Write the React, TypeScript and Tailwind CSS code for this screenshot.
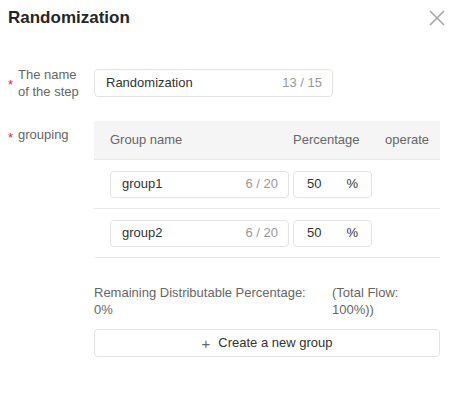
import React from "react";

const font = { fontFamily: '"Liberation Sans", Arial, sans-serif' };

function Star() {
  return <span className="text-[#f5222d] text-[13px] leading-[18px] w-[10px] shrink-0 pt-[3px]">*</span>;
}

export default function App() {
  return (
    <div className="w-[457px] h-[403px] bg-white text-[13px] text-[#333]" style={font}>
      <div className="flex items-center justify-between h-[35px] pl-[8px] pr-[12px]">
        <div className="text-[17px] font-bold text-[#262626]">Randomization</div>
        <svg width="16" height="16" viewBox="0 0 16 16" className="mt-[1px]">
          <path d="M1 1L15 15M15 1L1 15" stroke="#a6a6a6" strokeWidth="1.6" />
        </svg>
      </div>

      <div className="flex mt-[31px] pl-[8px]">
        <div className="flex items-center w-[86px] self-start">
          <Star />
          <div className="text-[#666] leading-[17px]">
            The name
            <br />
            of the step
          </div>
        </div>
        <div className="mt-[3px] w-[239px] h-[28px] border border-[#e3e3e3] rounded-[4px] flex items-center justify-between pl-[11px] pr-[10px]">
          <span>Randomization</span>
          <span className="text-[#999]">13 / 15</span>
        </div>
      </div>

      <div className="flex mt-[21px] pl-[8px]">
        <div className="flex items-start w-[86px] pt-[5px]">
          <Star />
          <div className="text-[#666] leading-[18px]">grouping</div>
        </div>
        <div className="w-[346px]">
          <div className="grid grid-cols-[195px_88px_63px] h-[39px] items-center bg-[#f5f5f5] border-b border-[#e8e8e8] text-[#666]">
            <div className="pl-[16px]">Group name</div>
            <div className="pl-[4px]">Percentage</div>
            <div className="pl-[8px]">operate</div>
          </div>
          {["group1", "group2"].map((g) => (
            <div key={g} className="grid grid-cols-[195px_88px_63px] h-[49px] items-center border-b border-[#e8e8e8]">
              <div className="pl-[16px]">
                <div className="w-[179px] h-[27px] border border-[#e3e3e3] rounded-[4px] flex items-center justify-between pl-[11px] pr-[10px]">
                  <span>{g}</span>
                  <span className="text-[#999]">6 / 20</span>
                </div>
              </div>
              <div className="pl-[4px]">
                <div className="w-[79px] h-[27px] border border-[#e3e3e3] rounded-[4px] flex items-center justify-between pl-[13px] pr-[13px]">
                  <span>50</span>
                  <span>%</span>
                </div>
              </div>
              <div />
            </div>
          ))}
          <div className="flex mt-[26px] text-[#666] leading-[17px]">
            <div className="w-[238px]">
              Remaining Distributable Percentage:
              <br />
              0%
            </div>
            <div>
              (Total Flow:
              <br />
              100%))
            </div>
          </div>
          <div className="mt-[11px] h-[28px] border border-[#e3e3e3] rounded-[4px] flex items-center justify-center gap-[8px] text-[#333]">
            <span className="text-[15px] leading-none text-[#666]">+</span>
            <span>Create a new group</span>
          </div>
        </div>
      </div>
    </div>
  );
}
